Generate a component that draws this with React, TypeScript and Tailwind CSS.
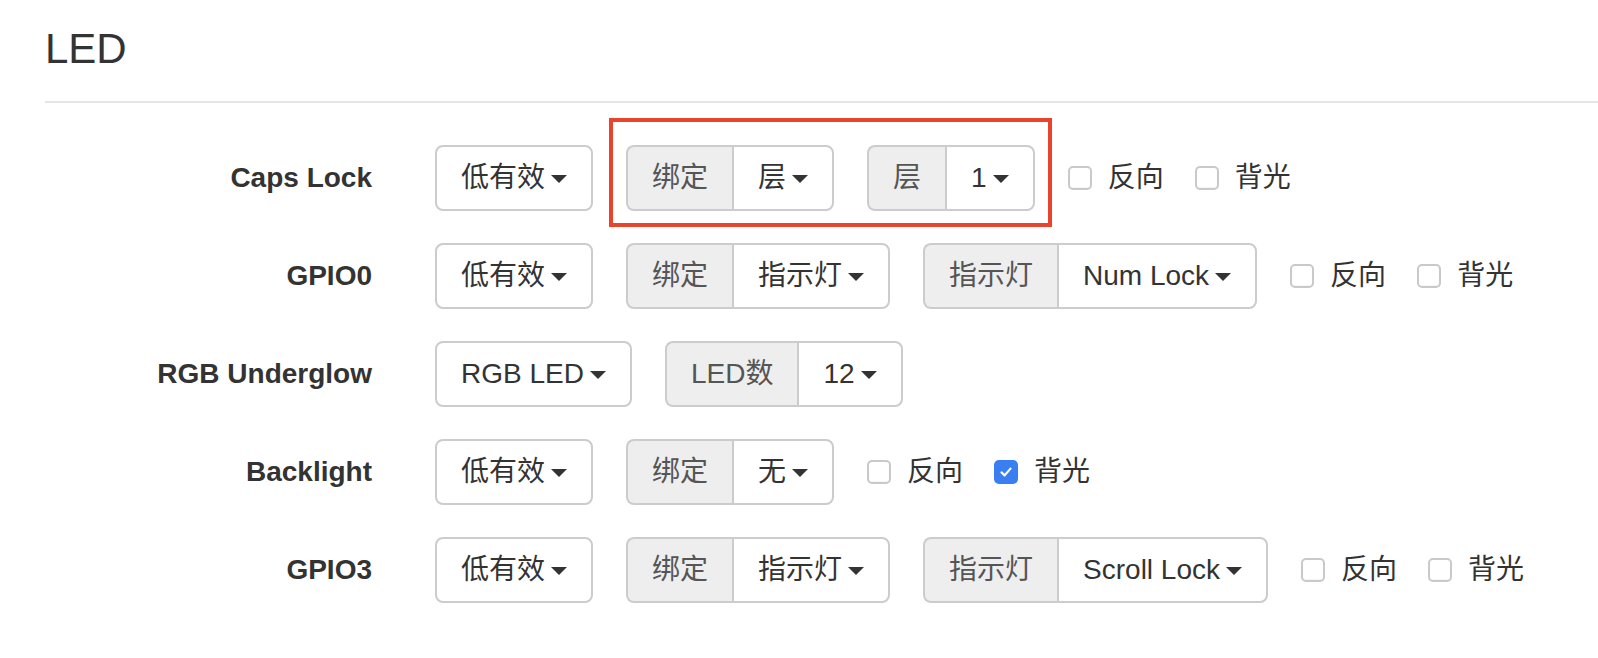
import React from "react";

type Part =
  | { kind: "select"; label: string }
  | { kind: "group"; addon: string; value: string }
  | { kind: "check"; label: string; checked?: boolean };

const rows: { name: string; parts: Part[] }[] = [
  {
    name: "Caps Lock",
    parts: [
      { kind: "select", label: "低有效" },
      { kind: "group", addon: "绑定", value: "层" },
      { kind: "group", addon: "层", value: "1" },
      { kind: "check", label: "反向" },
      { kind: "check", label: "背光" },
    ],
  },
  {
    name: "GPIO0",
    parts: [
      { kind: "select", label: "低有效" },
      { kind: "group", addon: "绑定", value: "指示灯" },
      { kind: "group", addon: "指示灯", value: "Num Lock" },
      { kind: "check", label: "反向" },
      { kind: "check", label: "背光" },
    ],
  },
  {
    name: "RGB Underglow",
    parts: [
      { kind: "select", label: "RGB LED" },
      { kind: "group", addon: "LED数", value: "12" },
    ],
  },
  {
    name: "Backlight",
    parts: [
      { kind: "select", label: "低有效" },
      { kind: "group", addon: "绑定", value: "无" },
      { kind: "check", label: "反向" },
      { kind: "check", label: "背光", checked: true },
    ],
  },
  {
    name: "GPIO3",
    parts: [
      { kind: "select", label: "低有效" },
      { kind: "group", addon: "绑定", value: "指示灯" },
      { kind: "group", addon: "指示灯", value: "Scroll Lock" },
      { kind: "check", label: "反向" },
      { kind: "check", label: "背光" },
    ],
  },
];

function Caret() {
  return (
    <span className="inline-block w-0 h-0 ml-[6px] mt-[2px] border-t-[8px] border-t-[#333] border-x-[8px] border-x-transparent" />
  );
}

function Select({ label, grouped }: { label: string; grouped?: boolean }) {
  return (
    <div
      className={
        grouped
          ? "h-[66px] flex items-center px-[24px] bg-white border-2 border-[#ccc] rounded-r-[8px] text-[#333]"
          : "h-[66px] flex items-center px-[24px] bg-white border-2 border-[#ccc] rounded-[8px] text-[#333]"
      }
    >
      <span>{label}</span>
      <Caret />
    </div>
  );
}

function Check({ label, checked }: { label: string; checked?: boolean }) {
  return (
    <label className="flex items-center gap-[16px] text-[#333]">
      {checked ? (
        <span className="w-[24px] h-[24px] rounded-[5px] bg-[#3a7ff2] flex items-center justify-center">
          <svg width="16" height="16" viewBox="0 0 16 16" fill="none">
            <path d="M3.5 8.4 L6.6 11.4 L12.5 4.6" stroke="#fff" strokeWidth="2.2" strokeLinecap="round" strokeLinejoin="round" />
          </svg>
        </span>
      ) : (
        <span className="w-[24px] h-[24px] rounded-[5px] bg-white border-2 border-[#c9c9c9] shadow-[inset_0_-1px_1px_rgba(0,0,0,0.04)]" />
      )}
      <span>{label}</span>
    </label>
  );
}

function Field({ part }: { part: Part }) {
  if (part.kind === "select") return <Select label={part.label} />;
  if (part.kind === "check") return <Check label={part.label} checked={part.checked} />;
  return (
    <div className="flex">
      <div className="h-[66px] flex items-center px-[24px] bg-[#eee] border-2 border-r-0 border-[#ccc] rounded-l-[8px] text-[#555]">
        {part.addon}
      </div>
      <Select label={part.value} grouped />
    </div>
  );
}

export default function App() {
  return (
    <div
      className="relative w-[1598px] h-[658px] bg-white text-[#333] overflow-hidden"
      style={{ fontFamily: '"Liberation Sans", "Noto Sans CJK SC", sans-serif' }}
    >
      <div className="pl-[45px]">
        <h1 className="mt-[28px] pb-[31px] text-[42px] leading-[42px] border-b-2 border-[#e5e5e5]">LED</h1>
      </div>

      <div className="mt-[42px] flex flex-col gap-[32px] text-[28px]">
        {rows.map((row) => (
          <div key={row.name} className="flex items-center h-[66px]">
            <div className="w-[372px] text-right font-bold">{row.name}</div>
            <div className="ml-[63px] flex items-center">
              {row.parts.map((p, i) => {
                const prev = i > 0 ? row.parts[i - 1] : null;
                const gap =
                  i === 0 ? "" : p.kind === "check" && prev?.kind === "check" ? "ml-[31px]" : "ml-[33px]";
                return (
                  <div key={i} className={gap}>
                    <Field part={p} />
                  </div>
                );
              })}
            </div>
          </div>
        ))}
      </div>

      {/* highlight annotation */}
      <div className="absolute left-[609px] top-[118px] w-[443px] h-[109px] border-[4px] border-[#e8432d] pointer-events-none" />
    </div>
  );
}
